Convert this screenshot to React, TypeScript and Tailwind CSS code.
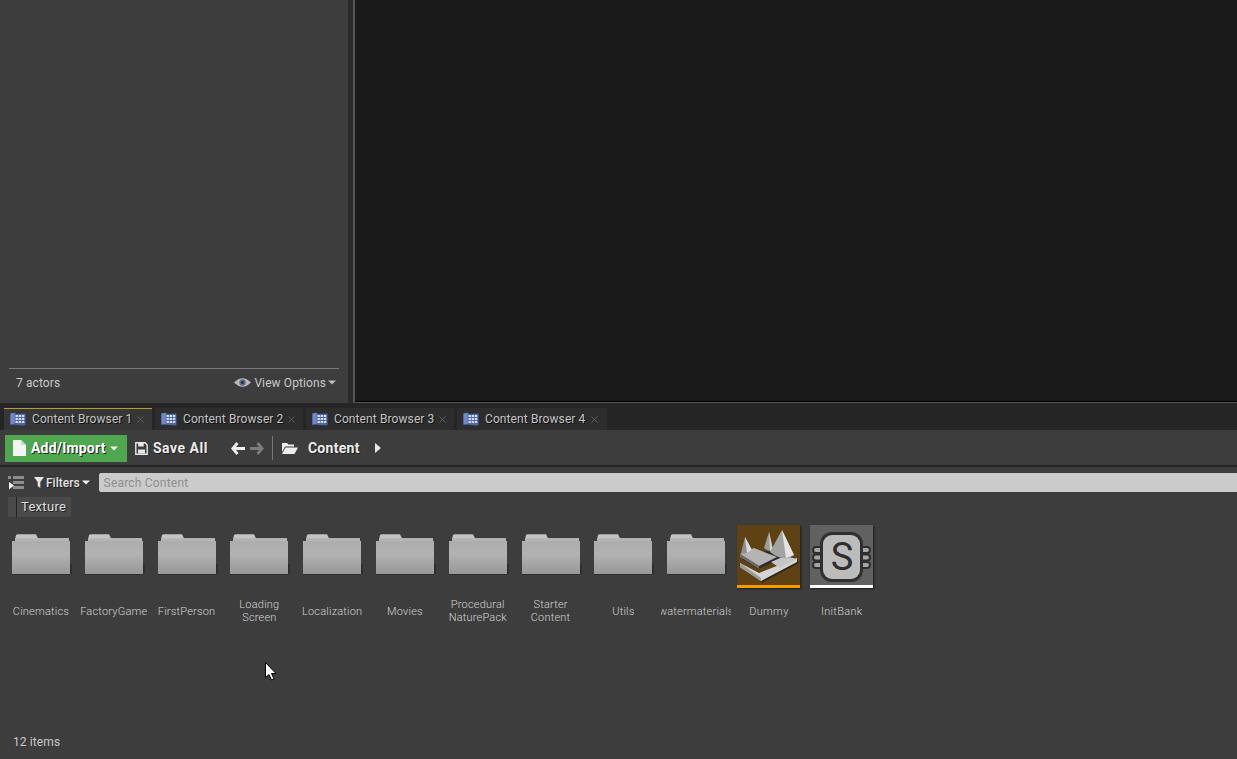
import { useId } from "react";

const folders = [
  ["Cinematics"],
  ["FactoryGame"],
  ["FirstPerson"],
  ["Loading", "Screen"],
  ["Localization"],
  ["Movies"],
  ["Procedural", "NaturePack"],
  ["Starter", "Content"],
  ["Utils"],
  ["watermaterials"],
];

const tabs = ["Content Browser 1", "Content Browser 2", "Content Browser 3", "Content Browser 4"];

function BrowserIcon() {
  return (
    <svg width="16" height="14" viewBox="0 0 16 14" className="shrink-0">
      <path d="M0.5 1.5 L5 0.5 L6 2 L15.5 1.5 L15.5 13 L14 13.5 L2 12.5 L0.5 13 Z" fill="#4f67a8" />
      <path d="M0.5 1.5 L4.5 1 L4.5 12 L0.5 12.5 Z" fill="#7189c9" />
      <g fill="#d5dcf0">
        <rect x="5.5" y="3" width="2.4" height="2" />
        <rect x="8.7" y="3" width="2.4" height="2" />
        <rect x="11.9" y="3" width="2.4" height="2" />
        <rect x="5.5" y="6" width="2.4" height="2" />
        <rect x="8.7" y="6" width="2.4" height="2" />
        <rect x="11.9" y="6" width="2.4" height="2" />
        <rect x="5.5" y="9" width="2.4" height="2" />
        <rect x="8.7" y="9" width="2.4" height="2" />
        <rect x="11.9" y="9" width="2.4" height="2" />
      </g>
    </svg>
  );
}

function Caret({ color = "#d8d8d8" }: { color?: string }) {
  return (
    <svg width="8" height="5" viewBox="0 0 8 5" className="shrink-0">
      <path d="M0 0.5 H8 L4 4.5 Z" fill={color} />
    </svg>
  );
}

function TabItem({ label, index }: { label: string; index: number }) {
  const active = index === 0;
  return (
    <div
      className={
        active
          ? "flex h-[22px] w-[148px] items-center border-t border-[#b3a02b] bg-[#363636] pr-[8px] pb-[1px] pl-[6px]"
          : index === 3
            ? "flex h-[22px] w-[150px] items-center bg-[#2d2d2d] pr-[9px] pl-[6px]"
            : "flex h-[22px] w-[148px] items-center bg-[#2d2d2d] pr-[8px] pl-[6px]"
      }
    >
      <BrowserIcon />
      <span className="ml-[6px] text-[12px] tracking-[0.1px] text-[#c4c4c4] [text-shadow:1px_1px_0_#111]">{label}</span>
      <svg width="7" height="7" viewBox="0 0 7 7" className="ml-auto">
        <path d="M0.5 0.5 L6.5 6.5 M6.5 0.5 L0.5 6.5" stroke="#5e5e5e" strokeWidth="1" />
      </svg>
    </div>
  );
}

function FolderIcon() {
  const id = useId();
  return (
    <svg width="60" height="42" viewBox="0 0 60 42" className="block">
      <defs>
        <linearGradient id={id} x1="0" y1="0" x2="0" y2="1">
          <stop offset="0" stopColor="#adadad" />
          <stop offset="0.4" stopColor="#b2b2b2" />
          <stop offset="1" stopColor="#989898" />
        </linearGradient>
      </defs>
      <path d="M3 5 L4 1.2 Q4.5 0.2 6 0.2 H24 L26 4.2 H57 V8 H3 Z" fill="#c4c4c4" />
      <path d="M3 4.2 H57 V7 H3 Z" fill="#b4b4b4" />
      <rect x="58" y="30" width="2" height="10" fill="#2f2f2f" />
      <rect x="0" y="7" width="58" height="33" fill={`url(#${id})`} />
      <rect x="0" y="40" width="58" height="1" fill="#2e2e2e" />
    </svg>
  );
}

function FolderTile({ lines }: { lines: string[] }) {
  return (
    <div className="flex w-[72.8px] flex-col items-center">
      <div className="h-[42px] w-[58px]">
        <FolderIcon />
      </div>
      <div className="mt-[20px] flex h-[30px] w-[70px] flex-col items-center justify-center overflow-hidden text-center text-[11px] leading-[13px] font-light tracking-[0.2px] whitespace-nowrap text-[#d4d4d4]">
        {lines.map((l) => (
          <span key={l}>{l}</span>
        ))}
      </div>
    </div>
  );
}

function DummyIcon() {
  return (
    <svg width="63" height="60" viewBox="0 0 63 60" className="block">
      <rect width="63" height="60" fill="#5e4214" />
      <path d="M24 58 L62 38 L60 34 L26 50 Z" fill="#2a2416" />
      <path d="M3 38 L22 48 L60 33 L60 37 L24 56 L3 42 Z" fill="#d4d4d4" />
      <path d="M3 42 L24 56 L24 53 L3 38 Z" fill="#9a9a9a" />
      <path d="M5 34 L21 44 L46 33 L30 26 Z" fill="#2b2b2b" />
      <path d="M3 29 L17 23 L40 32 L22 41 Z" fill="#b4b4b4" />
      <path d="M3 29 L22 41 L22 44 L3 32 Z" fill="#6e6e6e" />
      <path d="M34 37 L48 31 L60 34 L43 43 Z" fill="#c6c6c6" />
      <path d="M4 28 L8 12 L15 25 Q9 30 4 28 Z" fill="#8f8f8f" />
      <path d="M8 12 L15 25 L10 28 Z" fill="#dcdcdc" />
      <path d="M27 23 L32 7 L36 25 Q31 27 27 23 Z" fill="#9c9c9c" />
      <path d="M32 7 L36 25 L33 26 Z" fill="#d2d2d2" />
      <path d="M33 27 L45 5 L57 30 Q47 38 33 27 Z" fill="#a3a3a3" />
      <path d="M45 5 L57 30 L49 33 Z" fill="#e4e4e4" />
    </svg>
  );
}

function InitBankIcon() {
  return (
    <svg width="63" height="60" viewBox="0 0 63 60" className="block">
      <rect width="63" height="60" fill="#616161" />
      <g stroke="#2e2e2e" strokeWidth="2" fill="#a6a6a6">
        <rect x="3" y="22" width="12" height="6" rx="3" />
        <rect x="3" y="29.5" width="12" height="6" rx="3" />
        <rect x="3" y="37" width="12" height="6" rx="3" />
        <rect x="48" y="22" width="12" height="6" rx="3" />
        <rect x="48" y="29.5" width="12" height="6" rx="3" />
        <rect x="48" y="37" width="12" height="6" rx="3" />
      </g>
      <rect x="10" y="7" width="43" height="50" rx="12" fill="#303030" />
      <rect x="13" y="10" width="37" height="44" rx="9" fill="#bcbcbc" />
      <text x="32" y="45" textAnchor="middle" fontFamily="Roboto, sans-serif" fontSize="38" fontWeight="400" fill="#2e2e2e">
        S
      </text>
    </svg>
  );
}

function AssetTile({ label, bar, children }: { label: string; bar: string; children: React.ReactNode }) {
  return (
    <div className="flex w-[72.8px] flex-col items-center">
      <div className="-mt-[9px] w-[63px] shadow-[1px_1px_2px_#1c1c1c]">
        {children}
        <div className={bar} />
      </div>
      <div className="mt-[9px] flex h-[30px] w-[70px] items-center justify-center text-[11px] font-light tracking-[0.3px] whitespace-nowrap text-[#d4d4d4]">
        {label}
      </div>
    </div>
  );
}

export default function App() {
  return (
    <div className="relative flex h-[759px] w-[1237px] flex-col overflow-hidden bg-[#3d3d3d] font-['Roboto',sans-serif] text-[12px]">
      {/* top: outliner + viewport */}
      <div className="flex h-[403px] shrink-0">
        <div className="flex w-[348px] shrink-0 flex-col justify-end bg-[#3d3d3d] px-[9px] pb-[9px]">
          <div className="flex h-[26px] items-center justify-between border-t border-[#7a7a7a] pt-[2px] pr-[3px] pl-[7px] tracking-[0.1px] text-[#c8c8c8]">
            <span>7 actors</span>
            <div className="flex items-center">
              <svg width="17" height="11" viewBox="0 0 18 11" className="mr-[3px]">
                <path d="M0 5.5 Q9 -3.5 18 5.5 Q9 14.5 0 5.5 Z" fill="#b8b8b8" />
                <circle cx="9" cy="5.5" r="3.4" fill="#5a6c8c" />
                <circle cx="9" cy="5.5" r="1.5" fill="#20283a" />
              </svg>
              <span>View Options</span>
              <span className="ml-[2px]">
                <Caret color="#bdbdbd" />
              </span>
            </div>
          </div>
        </div>
        <div className="w-[5px] shrink-0 bg-[#2b2b2b]" />
        <div className="min-w-0 flex-1 border-b border-l-2 border-[#555555] bg-[#1a1a1a] shadow-[inset_0_-1px_0_#000]" />
      </div>

      {/* tab strip */}
      <div className="flex h-[27px] shrink-0 items-end gap-[3px] bg-[#252525] pl-[4px]">
        {tabs.map((t, i) => (
          <TabItem key={t} label={t} index={i} />
        ))}
      </div>

      {/* toolbar */}
      <div className="flex h-[37px] shrink-0 items-center border-b-2 border-[#262626] bg-[#3d3d3d] pt-[1px] pl-[5px]">
        <div className="flex h-[27px] w-[122px] items-center bg-[#4fa84f] pl-[8px]">
          <svg width="13" height="16" viewBox="0 0 13 16">
            <path d="M0 0 H8 L13 5 V16 H0 Z" fill="#f4f4f4" />
            <path d="M8 0 V5 H13 Z" fill="#c8d8c8" />
          </svg>
          <span className="ml-[5px] text-[14px] font-bold tracking-[0.2px] text-white [text-shadow:1px_1px_0_#222]">Add/Import</span>
          <span className="ml-[4px]">
            <Caret color="#f0f0f0" />
          </span>
        </div>
        <svg width="13" height="13" viewBox="0 0 13 13" className="ml-[8px]">
          <path d="M0.8 0.8 H10 L12.2 3 V12.2 H0.8 Z" fill="none" stroke="#e8e8e8" strokeWidth="1.4" />
          <rect x="3.2" y="1" width="5.5" height="3.5" fill="#e8e8e8" />
          <rect x="3" y="7.5" width="7" height="4" fill="#e8e8e8" />
        </svg>
        <span className="ml-[5px] text-[14px] font-bold tracking-[0.5px] text-[#ececec] [text-shadow:1px_1px_0_#222]">Save All</span>
        <svg width="14" height="13" viewBox="0 0 14 13" className="ml-[23px]">
          <path d="M6.5 1 L1.8 6.5 L6.5 12 M2.5 6.5 H14" fill="none" stroke="#eeeeee" strokeWidth="2.8" />
        </svg>
        <svg width="14" height="13" viewBox="0 0 14 13" className="ml-[5px]">
          <path d="M7.5 1 L12.2 6.5 L7.5 12 M0 6.5 H11.5" fill="none" stroke="#7c7c7c" strokeWidth="2.8" />
        </svg>
        <div className="ml-[8px] h-[24px] w-[1px] bg-[#777777]" />
        <svg width="16" height="12" viewBox="0 0 16 12" className="ml-[9px]">
          <path d="M0 1 H5 L6.5 2.5 H12 V4.5 H3 L0 10 Z" fill="#eeeeee" />
          <path d="M3.5 5.5 H16 L12.5 12 H0 Z" fill="#eeeeee" />
        </svg>
        <span className="ml-[10px] text-[14px] font-bold tracking-[0.3px] text-[#ececec] [text-shadow:1px_1px_0_#222]">Content</span>
        <svg width="6" height="10" viewBox="0 0 6 10" className="ml-[15px]">
          <path d="M0 0 L6 5 L0 10 Z" fill="#e8e8e8" />
        </svg>
      </div>

      {/* filters row */}
      <div className="flex h-[27px] shrink-0 items-center pt-[4px] pl-[8px]">
        <svg width="16" height="14" viewBox="0 0 16 14">
          <g fill="#8d8d8d">
            <rect x="0" y="0" width="3" height="3" />
            <rect x="5" y="0" width="11" height="3" />
            <rect x="5" y="5" width="11" height="3" />
            <rect x="5" y="10" width="11" height="3" />
          </g>
          <path d="M1 6 L6 9.5 L1 13.5 Z" fill="#f2f2f2" />
        </svg>
        <svg width="10" height="11" viewBox="0 0 10 11" className="ml-[10px]">
          <path d="M0 0 H10 L6.3 5 V11 L3.7 9 V5 Z" fill="#e6e6e6" />
        </svg>
        <span className="ml-[2px] font-medium text-[#e2e2e2] [text-shadow:1px_1px_0_#222]">Filters</span>
        <span className="ml-[2px]">
          <Caret color="#f0f0f0" />
        </span>
        <div className="ml-[9px] flex h-[19px] flex-1 items-center rounded-l-[2px] bg-[#cbcbcb] pl-[5px] tracking-[0.2px] text-[#8e8e8e]">
          Search Content
        </div>
      </div>

      {/* active filter chip */}
      <div className="flex h-[23px] shrink-0 pt-[3px] pl-[8px]">
        <div className="flex h-[20px] w-[63px] items-center rounded-[2px] bg-[#4a4a4a]">
          <div className="h-full w-[9px] border-r border-[#222222]" />
          <span className="ml-[4px] text-[13px] tracking-[0.3px] text-[#dedede] [text-shadow:1px_1px_0_#222]">Texture</span>
        </div>
      </div>

      {/* asset grid */}
      <div className="flex shrink-0 pt-[17px] pl-[4.6px]">
        {folders.map((lines) => (
          <FolderTile key={lines[0]} lines={lines} />
        ))}
        <AssetTile label="Dummy" bar="h-[3px] bg-[#f79c00]">
          <DummyIcon />
        </AssetTile>
        <AssetTile label="InitBank" bar="h-[3px] bg-white">
          <InitBankIcon />
        </AssetTile>
      </div>

      <div className="mt-auto mb-[8px] pl-[13px] tracking-[0.1px] text-[#c8c8c8]">12 items</div>

      {/* mouse pointer */}
      <svg width="12" height="19" viewBox="0 0 12 19" className="absolute top-[662px] left-[265px]">
        <path d="M0.5 0.5 V15.5 L4 12.5 L6.5 18 L9 17 L6.5 11.5 H11 Z" fill="#ffffff" stroke="#000000" strokeWidth="1" />
      </svg>
    </div>
  );
}
